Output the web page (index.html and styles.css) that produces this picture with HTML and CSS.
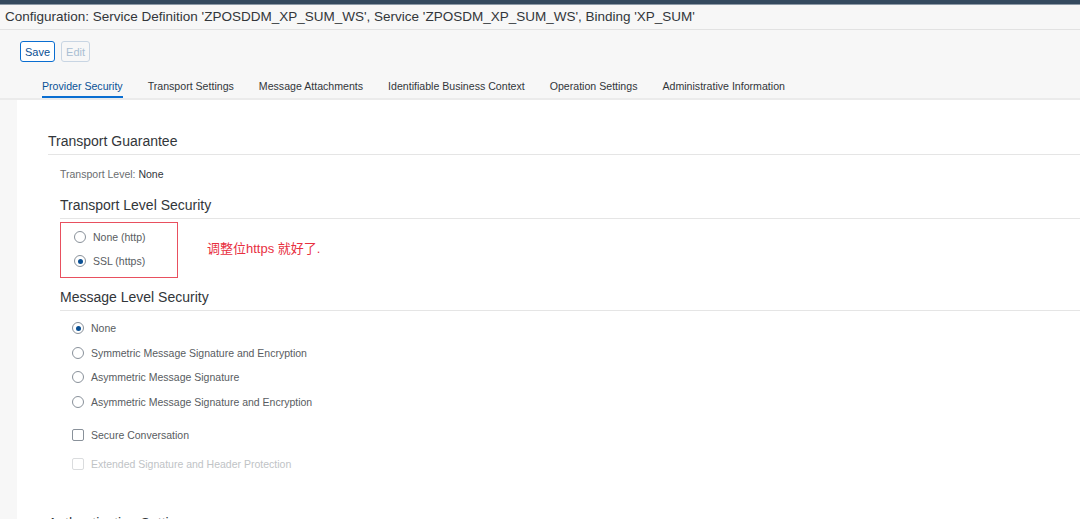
FILE: index.html
```html
<!DOCTYPE html>
<html lang="en">
<head>
    <meta charset="UTF-8">
    <title>Configuration: Service Definition</title>
    <link rel="stylesheet" href="styles.css">
</head>
<body>
    <div class="shell-bar"></div>
    <div class="page-title">Configuration: Service Definition 'ZPOSDDM_XP_SUM_WS', Service 'ZPOSDM_XP_SUM_WS', Binding 'XP_SUM'</div>

    <div class="toolbar">
        <button class="btn">Save</button>
        <button class="btn disabled">Edit</button>
    </div>

    <div class="tabs">
        <span class="tab active">Provider Security</span>
        <span class="tab">Transport Settings</span>
        <span class="tab">Message Attachments</span>
        <span class="tab">Identifiable Business Context</span>
        <span class="tab">Operation Settings</span>
        <span class="tab">Administrative Information</span>
    </div>

    <div class="content">
        <h2 class="section-title">Transport Guarantee</h2>
        <div class="sub">
            <p class="field"><span class="field-label">Transport Level:</span> None</p>

            <h3 class="group-title">Transport Level Security</h3>
            <div class="tls-row">
                <div class="marked">
                    <label class="option"><span class="radio"></span>None (http)</label>
                    <label class="option"><span class="radio checked"></span>SSL (https)</label>
                </div>
                <span class="note">调整位https 就好了.</span>
            </div>

            <h3 class="group-title">Message Level Security</h3>
            <div class="options">
                <label class="option"><span class="radio checked"></span>None</label>
                <label class="option"><span class="radio"></span>Symmetric Message Signature and Encryption</label>
                <label class="option"><span class="radio"></span>Asymmetric Message Signature</label>
                <label class="option"><span class="radio"></span>Asymmetric Message Signature and Encryption</label>
            </div>
            <label class="check"><span class="box"></span>Secure Conversation</label>
            <label class="check disabled"><span class="box"></span>Extended Signature and Header Protection</label>
        </div>

        <h2 class="section-title last">Authentication Settings</h2>
    </div>
</body>
</html>
```

FILE: styles.css
```css
body {
    margin: 0;
    font-family: "Liberation Sans", Arial, sans-serif;
    color: #32363a;
    background-color: #f7f7f7;
    overflow: hidden;
}
.shell-bar {
    height: 4px;
    background: #354a5f;
    border-bottom: 1px solid #8d9aa7;
}
.page-title {
    height: 24px;
    line-height: 24px;
    padding-left: 5px;
    font-size: 13.5px;
    white-space: nowrap;
    border-bottom: 1px solid #e2e2e2;
}
.toolbar {
    display: flex;
    gap: 6px;
    padding: 11px 0 0 20px;
    height: 21px;
}
.btn {
    font-family: inherit;
    font-size: 11px;
    height: 21px;
    padding: 0 4px;
    background: #fff;
    color: #0a4f93;
    border: 1px solid #0a6ed1;
    border-radius: 3px;
}
.btn.disabled {
    color: #a9bed3;
    border-color: #c8d5e3;
    background: #f7f7f7;
}
.tabs {
    display: flex;
    gap: 25px;
    padding: 18px 0 0 42px;
    height: 18px;
    border-bottom: 2px solid #ebebeb;
}
.tab {
    font-size: 10.6px;
    line-height: 13px;
    color: #32363a;
    white-space: nowrap;
}
.tab.active {
    color: #0a5296;
    border-bottom: 2px solid #0a6ed1;
    height: 16px;
}
.content {
    margin-left: 17px;
    background: #fff;
    padding: 33px 0 0 31px;
    height: 420px;
}
.section-title {
    margin: 0;
    font-size: 14px;
    font-weight: normal;
    padding-bottom: 5px;
    border-bottom: 1px solid #e5e5e5;
}
.section-title.last {
    margin-top: 39px;
    border: none;
}
.sub {
    padding-left: 12px;
}
.field {
    margin: 12px 0 0;
    font-size: 10.5px;
    line-height: 14px;
}
.field-label {
    color: #6a6d70;
}
.group-title {
    margin: 16px 0 0;
    font-size: 14px;
    font-weight: normal;
    padding-bottom: 5px;
    border-bottom: 1px solid #e5e5e5;
}
.tls-row + .group-title {
    margin-top: 11px;
}
.tls-row {
    display: flex;
    align-items: center;
    margin-top: 3px;
}
.marked {
    width: 118px;
    height: 56px;
    border: 1px solid #e8505f;
    padding-top: 2px;
    box-sizing: border-box;
}
.note {
    margin-left: 29px;
    margin-bottom: 5px;
    font-size: 13px;
    color: #e8303f;
    font-family: "Liberation Sans", "Noto Sans CJK SC", sans-serif;
}
.options {
    margin-top: 5px;
}
.option, .check {
    display: flex;
    align-items: center;
    height: 24.5px;
    padding-left: 12px;
    font-size: 10.5px;
    color: #585c61;
}
.marked .option {
    padding-left: 13px;
    height: 24px;
}
.radio {
    width: 12px;
    height: 12px;
    border: 1px solid #89919a;
    border-radius: 50%;
    margin-right: 7px;
    box-sizing: border-box;
    display: flex;
    align-items: center;
    justify-content: center;
    background: #fff;
}
.radio.checked::after {
    content: "";
    width: 5px;
    height: 5px;
    border-radius: 50%;
    background: #0a4f93;
}
.check {
    margin-top: 9px;
}
.check + .check {
    margin-top: 4px;
}
.box {
    width: 12px;
    height: 12px;
    border: 1px solid #89919a;
    border-radius: 2px;
    margin-right: 7px;
    box-sizing: border-box;
}
.check.disabled {
    color: #c0c3c6;
}
.check.disabled .box {
    border-color: #dadcde;
}
```
